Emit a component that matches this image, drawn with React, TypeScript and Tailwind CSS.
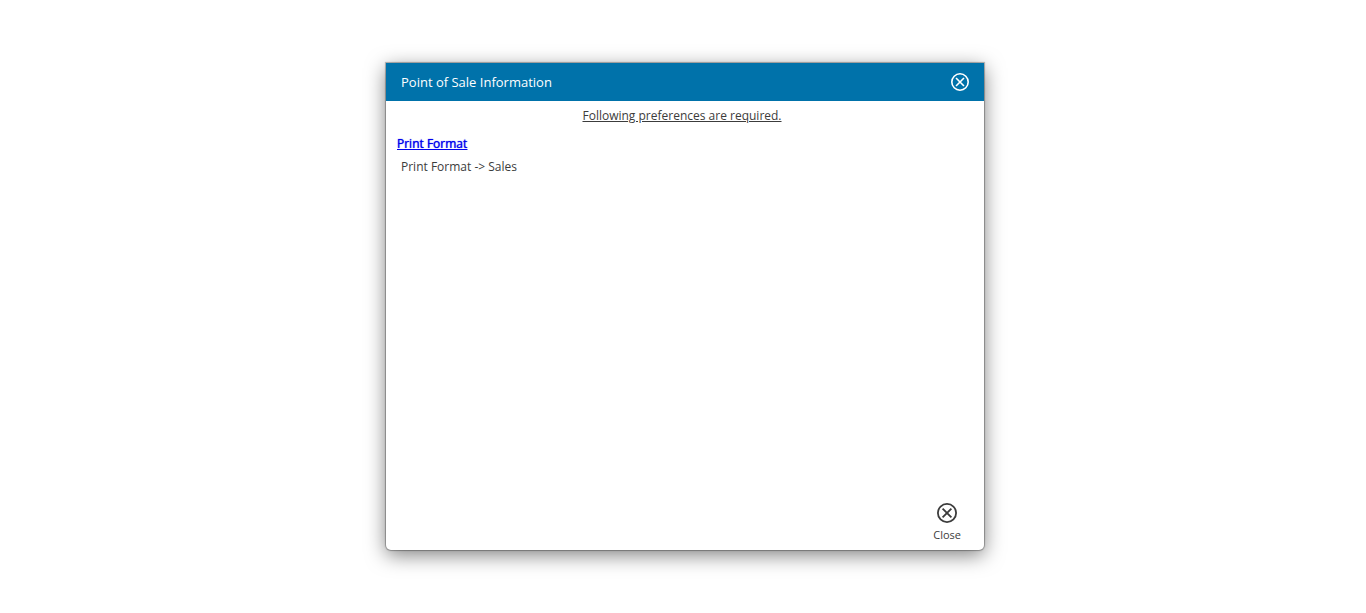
import React from "react";

function CircleX({ className }: { className: string }) {
  return (
    <svg viewBox="0 0 20 20" fill="none" stroke="currentColor" className={className} aria-hidden="true">
      <circle cx="10" cy="10" r="9.1" strokeWidth="1.8" />
      <path d="M5.6 5.6l8.8 8.8M14.4 5.6l-8.8 8.8" strokeWidth="1.8" />
    </svg>
  );
}

export default function App() {
  return (
    <main className="flex min-h-screen items-center justify-center bg-white pl-1 font-['Open_Sans',sans-serif] text-[#3c3c3c]">
      <section
        role="dialog"
        aria-labelledby="dialog-title"
        className="flex min-h-[487px] w-full max-w-[598px] flex-col overflow-hidden rounded-b-[5px] bg-white shadow-[0_0_1px_1px_rgba(0,0,0,0.3),0_5px_20px_rgba(0,0,0,0.5)]"
      >
        <header className="flex items-center justify-between bg-[#0072aa] px-[15px] py-2 text-white">
          <h1 id="dialog-title" className="text-[13px] leading-[22px]">Point of Sale Information</h1>
          <button type="button" aria-label="Close dialog">
            <CircleX className="size-[18px]" />
          </button>
        </header>
        <div className="flex-1 px-[11px] pt-1">
          <p className="pr-1.5 text-center text-xs leading-[22px] underline">Following preferences are required.</p>
          <a href="#print-format" className="mt-[7px] block w-fit text-xs leading-5 text-[#0000ee] underline [text-shadow:0_0_1px_#0000ee]">Print Format</a>
          <p className="px-1 text-xs leading-[26px]">Print Format -&gt; Sales</p>
        </div>
        <footer className="flex justify-end px-[23px] pb-[7px]">
          <button type="button" className="flex flex-col items-center gap-1 text-[11px] leading-4">
            <CircleX className="size-5" />
            Close
          </button>
        </footer>
      </section>
    </main>
  );
}
